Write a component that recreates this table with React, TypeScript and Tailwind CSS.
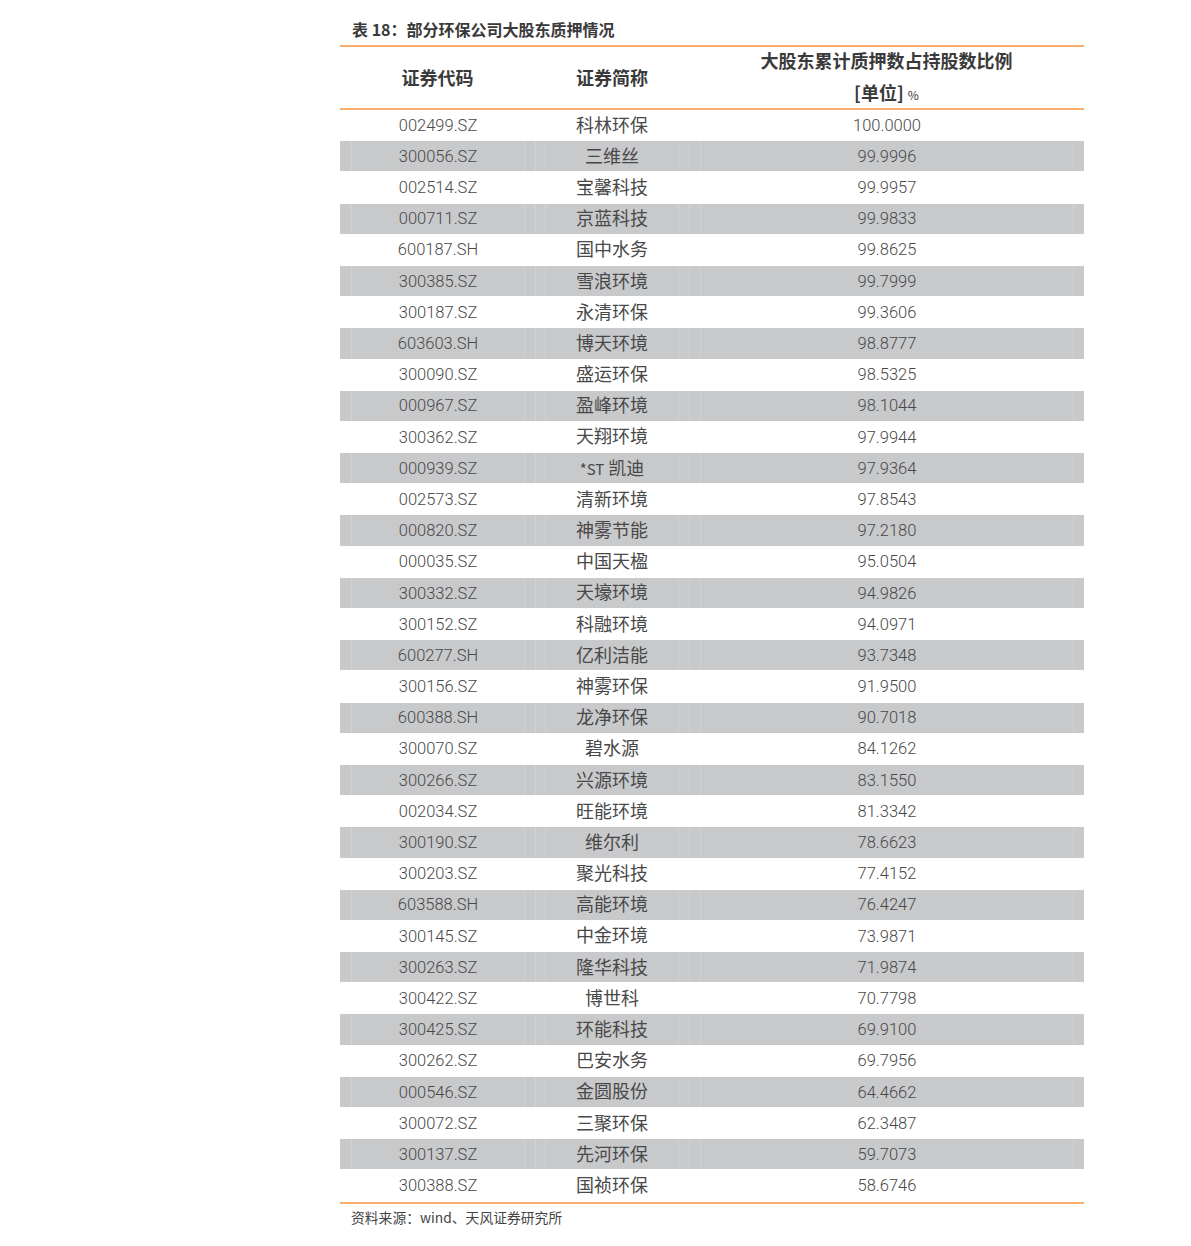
import React from "react";

const rows: [string, string, string][] = [
  ["002499.SZ", "科林环保", "100.0000"],
  ["300056.SZ", "三维丝", "99.9996"],
  ["002514.SZ", "宝馨科技", "99.9957"],
  ["000711.SZ", "京蓝科技", "99.9833"],
  ["600187.SH", "国中水务", "99.8625"],
  ["300385.SZ", "雪浪环境", "99.7999"],
  ["300187.SZ", "永清环保", "99.3606"],
  ["603603.SH", "博天环境", "98.8777"],
  ["300090.SZ", "盛运环保", "98.5325"],
  ["000967.SZ", "盈峰环境", "98.1044"],
  ["300362.SZ", "天翔环境", "97.9944"],
  ["000939.SZ", "*ST 凯迪", "97.9364"],
  ["002573.SZ", "清新环境", "97.8543"],
  ["000820.SZ", "神雾节能", "97.2180"],
  ["000035.SZ", "中国天楹", "95.0504"],
  ["300332.SZ", "天壕环境", "94.9826"],
  ["300152.SZ", "科融环境", "94.0971"],
  ["600277.SH", "亿利洁能", "93.7348"],
  ["300156.SZ", "神雾环保", "91.9500"],
  ["600388.SH", "龙净环保", "90.7018"],
  ["300070.SZ", "碧水源", "84.1262"],
  ["300266.SZ", "兴源环境", "83.1550"],
  ["002034.SZ", "旺能环境", "81.3342"],
  ["300190.SZ", "维尔利", "78.6623"],
  ["300203.SZ", "聚光科技", "77.4152"],
  ["603588.SH", "高能环境", "76.4247"],
  ["300145.SZ", "中金环境", "73.9871"],
  ["300263.SZ", "隆华科技", "71.9874"],
  ["300422.SZ", "博世科", "70.7798"],
  ["300425.SZ", "环能科技", "69.9100"],
  ["300262.SZ", "巴安水务", "69.7956"],
  ["000546.SZ", "金圆股份", "64.4662"],
  ["300072.SZ", "三聚环保", "62.3487"],
  ["300137.SZ", "先河环保", "59.7073"],
  ["300388.SZ", "国祯环保", "58.6746"],
];

const numFont = { fontFamily: "Roboto, 'Noto Sans CJK SC', sans-serif" };

function Name({ text }: { text: string }) {
  if (text.startsWith("*ST")) {
    return (
      <span>
        <span className="text-[15px]">*ST</span> 凯迪
      </span>
    );
  }
  return <span>{text}</span>;
}

export default function App() {
  return (
    <div className="min-h-[1246px] w-[1191px] bg-white" style={{ fontFamily: "'Noto Sans CJK SC', sans-serif" }}>
      <div className="ml-[340px] w-[744px]">
        <div className="pl-[12px] pt-[18px] pb-[5px] text-[16px] leading-[22px] font-bold text-[#3a3a3a]">
          表 18：部分环保公司大股东质押情况
        </div>
        <div className="h-[2px] bg-[#f8ab6b]" />
        <div className="flex h-[61px] text-[18px] font-bold text-[#3a3a3a]">
          <div className="flex w-[195px] items-center justify-center">证券代码</div>
          <div className="flex w-[154px] items-center justify-center">证券简称</div>
          <div className="flex w-[395px] flex-col items-center justify-center leading-[32px]">
            <div>大股东累计质押数占持股数比例</div>
            <div>
              [单位] <span className="text-[12px] font-normal">%</span>
            </div>
          </div>
        </div>
        <div className="h-[2px] bg-[#f8ab6b]" />
        <div className="flex flex-col">
          {rows.map(([code, name, val], i) => {
            const gray = i % 2 === 1;
            const bg = gray ? "bg-[#c8c9cb]" : "bg-white";
            const bc = gray ? "border-[#d2d3d5]" : "border-white";
            return (
              <div key={code} className={`flex h-[31.2px] border-b border-white ${bg} text-[#484848]`}>
                <div className="flex w-[195px] pl-[11px] pr-[10px]">
                  <div
                    className={`flex flex-1 items-center justify-center border-x ${bc} pt-[2px] text-[16.5px] font-light`}
                    style={numFont}
                  >
                    {code}
                  </div>
                </div>
                <div className={`flex w-[154px] border-l ${bc} pl-[9px] pr-[10px]`}>
                  <div className={`flex flex-1 items-center justify-center border-x ${bc} pb-[2px] text-[18px]`}>
                    <Name text={name} />
                  </div>
                </div>
                <div className={`flex w-[395px] border-l ${bc} px-[10px]`}>
                  <div
                    className={`flex flex-1 items-center justify-center border-x ${bc} pt-[2px] text-[16.5px] font-light`}
                    style={numFont}
                  >
                    {val}
                  </div>
                </div>
              </div>
            );
          })}
        </div>
        <div className="h-[2px] bg-[#f8ab6b]" />
        <div className="pl-[11px] pt-[3px] text-[13.8px] leading-[20px] text-[#444]">
          资料来源：wind、天风证券研究所
        </div>
      </div>
    </div>
  );
}
